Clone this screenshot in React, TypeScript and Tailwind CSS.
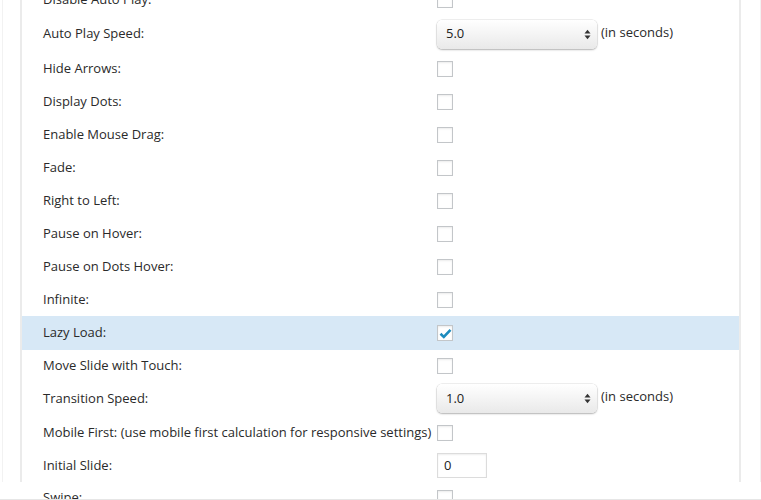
import React from "react";

type Row = {
  label: string;
  kind: "check" | "select" | "input";
  value?: string;
  checked?: boolean;
  h: string;
  active?: boolean;
};

const rows: Row[] = [
  { label: "Disable Auto Play:", kind: "check", h: "h-[33px]" },
  { label: "Auto Play Speed:", kind: "select", value: "5.0", h: "h-[36px]" },
  { label: "Hide Arrows:", kind: "check", h: "h-[33px]" },
  { label: "Display Dots:", kind: "check", h: "h-[33px]" },
  { label: "Enable Mouse Drag:", kind: "check", h: "h-[33px]" },
  { label: "Fade:", kind: "check", h: "h-[33px]" },
  { label: "Right to Left:", kind: "check", h: "h-[33px]" },
  { label: "Pause on Hover:", kind: "check", h: "h-[33px]" },
  { label: "Pause on Dots Hover:", kind: "check", h: "h-[33px]" },
  { label: "Infinite:", kind: "check", h: "h-[33px]" },
  { label: "Lazy Load:", kind: "check", checked: true, active: true, h: "h-[34px]" },
  { label: "Move Slide with Touch:", kind: "check", h: "h-[32px]" },
  { label: "Transition Speed:", kind: "select", value: "1.0", h: "h-[33px]" },
  {
    label: "Mobile First: (use mobile first calculation for responsive settings)",
    kind: "check",
    h: "h-[35px]",
  },
  { label: "Initial Slide:", kind: "input", value: "0", h: "h-[31px]" },
  { label: "Swipe:", kind: "check", h: "h-[33px]" },
];

const Checkbox = ({ checked }: { checked?: boolean }) => (
  <div className="w-4 h-4 shrink-0 border border-[#c3c6c9] bg-white shadow-[inset_0_1px_2px_rgba(0,0,0,0.08)] flex items-center justify-center">
    {checked && (
      <svg width="13" height="11" viewBox="0 0 13 11">
        <path d="M1.5 5.8 L4.8 9 L11.5 1.8" fill="none" stroke="#1e8cbe" strokeWidth="2.6" strokeLinejoin="miter" />
      </svg>
    )}
  </div>
);

const Select = ({ value }: { value?: string }) => (
  <div className="flex items-center gap-1">
    <div className="w-[160px] h-[29px] rounded-[5px] bg-gradient-to-b from-white to-[#e9e9e9] shadow-[0_1px_2px_rgba(0,0,0,0.25),0_0_0_0.5px_rgba(0,0,0,0.12)] flex items-center justify-between pl-[9px] pr-[6px]">
      <span className="text-[13px] text-[#222]">{value}</span>
      <svg width="7" height="11" viewBox="0 0 7 11">
        <path d="M0.5 4.5 L3.5 0.8 L6.5 4.5 Z" fill="#333" />
        <path d="M0.5 6.5 L3.5 10.2 L6.5 6.5 Z" fill="#333" />
      </svg>
    </div>
    <span className="text-[13px] text-[#2a2a2a] -mt-[3px]">(in seconds)</span>
  </div>
);

export default function App() {
  return (
    <div className="w-[761px] h-[500px] overflow-hidden bg-white border-b border-[#e6e6e6] pl-[2px] font-['Open_Sans',sans-serif]">
      <div className="w-[759px] h-full border-l border-r border-[#f2f2f2] pl-[17px]">
        <div className="w-[721px] h-full border-l-2 border-r-2 border-[#ebebeb]">
          <div className="-mt-[17px] flex flex-col">
            {rows.map((row) => (
              <div
                key={row.label}
                className={`${row.h} flex items-center pl-[21px] ${row.active ? "bg-[#d7e8f6]" : ""}`}
              >
                <div className="w-[394px] shrink-0 text-[13px] text-[#2a2a2a] whitespace-nowrap">{row.label}</div>
                {row.kind === "check" && <Checkbox checked={row.checked} />}
                {row.kind === "select" && <Select value={row.value} />}
                {row.kind === "input" && (
                  <div className="w-[50px] h-[25px] border border-[#dcdcdc] bg-white shadow-[inset_0_1px_2px_rgba(0,0,0,0.07)] flex items-center pl-[6px] text-[13px] text-[#222]">
                    {row.value}
                  </div>
                )}
              </div>
            ))}
          </div>
        </div>
      </div>
    </div>
  );
}
